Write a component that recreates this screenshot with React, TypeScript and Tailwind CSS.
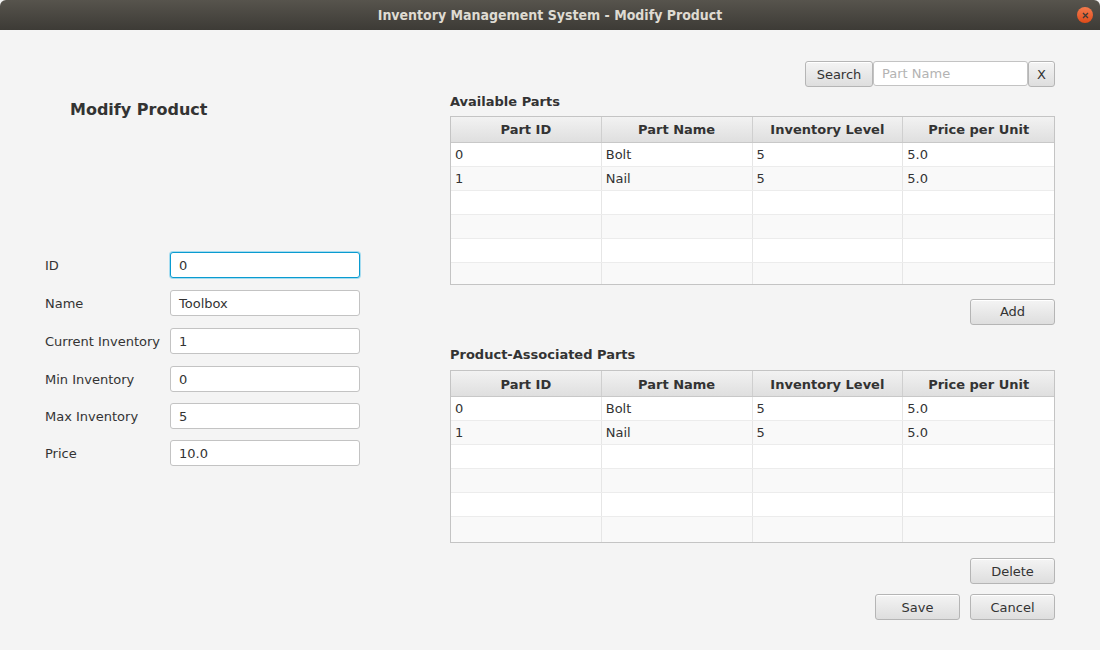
import React from "react";

const parts = [
  { id: "0", name: "Bolt", inv: "5", price: "5.0" },
  { id: "1", name: "Nail", inv: "5", price: "5.0" },
];

const fields = [
  { label: "ID", value: "0", focused: true },
  { label: "Name", value: "Toolbox" },
  { label: "Current Inventory", value: "1" },
  { label: "Min Inventory", value: "0" },
  { label: "Max Inventory", value: "5" },
  { label: "Price", value: "10.0" },
];

function Btn({ children, className = "" }: { children: React.ReactNode; className?: string }) {
  return (
    <button
      className={`h-[26px] pt-[1px] rounded-[3px] border border-[#b5b5b5] bg-gradient-to-b from-[#f4f4f4] to-[#dedede] text-[13px] text-[#333] shadow-[inset_0_1px_0_#fff] ${className}`}
    >
      {children}
    </button>
  );
}

function PartsTable({ rowHeights }: { rowHeights: number[] }) {
  const cols = ["Part ID", "Part Name", "Inventory Level", "Price per Unit"];
  return (
    <div className="border border-[#c4c4c4] bg-white">
      <div className="grid grid-cols-4 h-[26px] bg-gradient-to-b from-[#f2f2f2] to-[#dfdfdf] border-b border-[#c8c8c8]">
        {cols.map((c, i) => (
          <div
            key={c}
            className={`flex items-center justify-center pt-[2px] font-bold text-[13px] text-[#333] ${i < 3 ? "border-r border-[#cfcfcf]" : ""}`}
          >
            {c}
          </div>
        ))}
      </div>
      {rowHeights.map((h, r) => {
        const p = parts[r];
        const cells = p ? [p.id, p.name, p.inv, p.price] : ["", "", "", ""];
        return (
          <div
            key={r}
            style={{ height: h }}
            className={`grid grid-cols-4 ${r % 2 === 0 ? "bg-white" : "bg-[#f9f9f9]"} ${r < rowHeights.length - 1 ? "border-b border-[#ececec]" : ""}`}
          >
            {cells.map((c, i) => (
              <div
                key={i}
                className={`flex items-center pl-[4px] pt-[1px] text-[13px] text-[#333] ${i < 3 ? "border-r border-[#e6e6e6]" : ""}`}
              >
                {c}
              </div>
            ))}
          </div>
        );
      })}
    </div>
  );
}

export default function App() {
  return (
    <div className="w-[1100px] h-[650px] bg-[#f4f4f4] flex flex-col overflow-hidden" style={{ fontFamily: '"DejaVu Sans", sans-serif' }}>
      {/* title bar */}
      <div className="h-[30px] shrink-0 bg-gradient-to-b from-[#57544d] to-[#3d3b36] rounded-t-[6px] flex items-center relative">
        <div
          className="flex-1 text-center font-bold text-[14px] text-[#dfdbd2]"
          style={{ fontFamily: '"DejaVu Sans Condensed", "DejaVu Sans", sans-serif' }}
        >
          Inventory Management System - Modify Product
        </div>
        <div className="absolute right-[7px] top-[7px] w-[16px] h-[16px] rounded-full bg-gradient-to-b from-[#f37a4c] to-[#df4a16] flex items-center justify-center">
          <svg width="7" height="7" viewBox="0 0 7 7">
            <path d="M1 1 L6 6 M6 1 L1 6" stroke="#3c3b37" strokeWidth="1.3" />
          </svg>
        </div>
      </div>

      <div className="flex flex-1">
        {/* left */}
        <div className="w-[450px] shrink-0 flex flex-col pl-[45px]">
          <div className="pt-[68px] pl-[25px] text-[16px] font-bold text-[#333] h-[222px]">Modify Product</div>
          <div className="flex flex-col">
            {fields.map((f, i) => (
              <div key={f.label} className={`flex items-center h-[26px] ${i === 0 ? "" : i < 4 ? "mt-[12px]" : "mt-[11px]"}`}>
                <div className="w-[125px] pt-[2px] text-[13px] text-[#333]">{f.label}</div>
                <div
                  className={`w-[190px] h-[26px] pt-[2px] rounded-[3px] bg-white flex items-center pl-[8px] text-[13px] text-[#333] ${
                    f.focused ? "border border-[#0a9bd0] shadow-[0_0_0_1px_#a6dcf0]" : "border border-[#c3c3c3]"
                  }`}
                >
                  {f.value}
                </div>
              </div>
            ))}
          </div>
        </div>

        {/* right */}
        <div className="w-[605px] flex flex-col pt-[31px]">
          <div className="flex justify-end h-[25px]">
            <Btn className="w-[68px] h-[25px]">Search</Btn>
            <div className="w-[155px] h-[25px] pt-[1px] bg-white border border-[#c3c3c3] rounded-[3px] flex items-center pl-[8px] text-[13px] text-[#b3b3b3]">
              Part Name
            </div>
            <Btn className="w-[27px] h-[25px]">X</Btn>
          </div>
          <div className="mt-[6px] text-[13px] font-bold text-[#333]">Available Parts</div>
          <div className="mt-[4px]">
            <PartsTable rowHeights={[24, 24, 24, 24, 24, 21]} />
          </div>
          <div className="flex justify-end mt-[14px]">
            <Btn className="w-[85px]">Add</Btn>
          </div>
          <div className="mt-[20px] text-[13px] font-bold text-[#333]">Product-Associated Parts</div>
          <div className="mt-[6px]">
            <PartsTable rowHeights={[24, 24, 24, 24, 24, 25]} />
          </div>
          <div className="flex justify-end mt-[15px]">
            <Btn className="w-[85px]">Delete</Btn>
          </div>
          <div className="flex justify-end gap-[10px] mt-[10px]">
            <Btn className="w-[85px]">Save</Btn>
            <Btn className="w-[85px]">Cancel</Btn>
          </div>
        </div>
      </div>
    </div>
  );
}
